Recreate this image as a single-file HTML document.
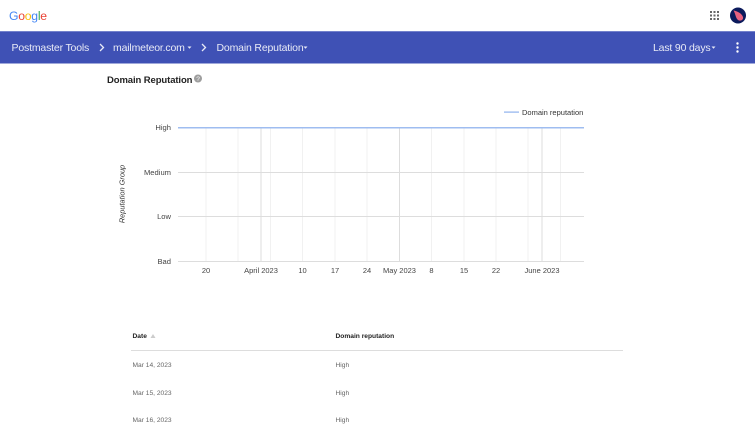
<!DOCTYPE html>
<html><head><meta charset="utf-8"><style>
html,body{margin:0;padding:0;background:#fff}
body{width:755px;height:430px;position:relative;overflow:hidden;font-family:"Liberation Sans",sans-serif}
.t{position:absolute;white-space:nowrap;line-height:1}
.g{position:absolute;top:0;left:0}
.n{top:42.500px;font-size:10.500px;color:#e8eaf6;letter-spacing:-.17px}
.c{top:124px;font-size:7.600px;color:#444;right:584px}
.x{top:266.500px;font-size:7.500px;color:#444;transform:translateX(-50%)}
.h{font-size:6.650px;font-weight:bold;color:#222;top:334px}
.d{font-size:6.650px;color:#666}
</style></head><body>
<div class="t" style="left:9px;top:9.500px;font-size:12.200px;letter-spacing:-.25px"><span style="color:#4285f4">G</span><span style="color:#ea4335">o</span><span style="color:#fbbc05">o</span><span style="color:#4285f4">g</span><span style="color:#34a853">l</span><span style="color:#ea4335">e</span></div>
<svg class="g" width="755" height="430" style="left:0;top:0">
<rect x="0" y="31" width="755" height="32.500" fill="#3f51b5"/>
<rect x="0" y="31" width="755" height="1" fill="#7381cc"/>
<g fill="#666"><rect x="710" y="11" width="2" height="2"/><rect x="713.500" y="11" width="2" height="2"/><rect x="717" y="11" width="2" height="2"/><rect x="710" y="14.500" width="2" height="2"/><rect x="713.500" y="14.500" width="2" height="2"/><rect x="717" y="14.500" width="2" height="2"/><rect x="710" y="18" width="2" height="2"/><rect x="713.500" y="18" width="2" height="2"/><rect x="717" y="18" width="2" height="2"/></g>
<circle cx="738" cy="15.500" r="8" fill="#0b1a5c"/>
<path d="M733.500 10.500C737 11 742 13.500 743 17C743.700 20 740.500 21.500 738 20C735.500 18 735.500 13.500 733.500 10.500Z" fill="#e8617f"/>
<path d="M100 44l3.500 3.500-3.500 3.500M202 44l3.500 3.500-3.500 3.500" fill="none" stroke="#e8eaf6" stroke-width="1.300"/>
<path d="M187.500 46.500h4l-2 2.200zM303.500 46.500h4l-2 2.200zM711.500 46.500h4l-2 2.200z" fill="#e8eaf6"/>
<g fill="#fff"><circle cx="737.500" cy="43.500" r="1.200"/><circle cx="737.500" cy="47.500" r="1.200"/><circle cx="737.500" cy="51.500" r="1.200"/></g>
<circle cx="198" cy="78.500" r="4" fill="#9e9e9e"/>
<text x="198" y="81" font-size="6.500" fill="#fff" text-anchor="middle" font-family="Liberation Sans">?</text>
<g fill="#f1f1f1">
<rect x="205.500" y="128" width="1" height="134"/><rect x="237.500" y="128" width="1" height="134"/><rect x="270" y="128" width="1" height="134"/><rect x="302" y="128" width="1" height="134"/><rect x="334.500" y="128" width="1" height="134"/><rect x="366.500" y="128" width="1" height="134"/><rect x="431" y="128" width="1" height="134"/><rect x="463.500" y="128" width="1" height="134"/><rect x="495.500" y="128" width="1" height="134"/><rect x="527.500" y="128" width="1" height="134"/><rect x="560" y="128" width="1" height="134"/>
</g>
<g fill="#ddd">
<rect x="260.500" y="128" width="1" height="134"/><rect x="399" y="128" width="1" height="134"/><rect x="541.500" y="128" width="1" height="134"/>
<rect x="178" y="172" width="406" height="1"/><rect x="178" y="216" width="406" height="1"/><rect x="178" y="261" width="406" height="1"/>
</g>
<rect x="178" y="127" width="406" height="1.500" fill="#9fbdf0"/>
<rect x="504" y="111.500" width="15" height="1.200" fill="#8fb2ee"/>
<rect x="131" y="350" width="492" height="1" fill="#ddd"/>
<path d="M150.500 338l2.500-4 2.500 4z" fill="#ccc"/>
</svg>
<div class="t n" style="left:11.500px">Postmaster Tools</div>
<div class="t n" style="left:113px">mailmeteor.com</div>
<div class="t n" style="left:216.500px">Domain Reputation</div>
<div class="t n" style="left:653px">Last 90 days</div>
<div class="t" style="left:107px;top:75.500px;font-size:9.500px;letter-spacing:-.1px;font-weight:bold;color:#222">Domain Reputation</div>
<div class="t" style="left:522px;top:108.500px;font-size:7.500px;color:#333">Domain reputation</div>
<div class="t c" style="top:124px">High</div>
<div class="t c" style="top:168.500px">Medium</div>
<div class="t c" style="top:213px">Low</div>
<div class="t c" style="top:257.500px">Bad</div>
<div class="t" style="left:122px;top:194px;font-size:7.400px;font-style:italic;color:#333;transform:translate(-50%,-50%) rotate(-90deg)">Reputation Group</div>
<div class="t x" style="left:206px">20</div>
<div class="t x" style="left:261px">April 2023</div>
<div class="t x" style="left:302.500px">10</div>
<div class="t x" style="left:335px">17</div>
<div class="t x" style="left:367px">24</div>
<div class="t x" style="left:399.500px">May 2023</div>
<div class="t x" style="left:431.500px">8</div>
<div class="t x" style="left:464px">15</div>
<div class="t x" style="left:496px">22</div>
<div class="t x" style="left:542px">June 2023</div>
<div class="t h" style="left:132.500px">Date</div>
<div class="t h" style="left:335.500px">Domain reputation</div>
<div class="t d" style="left:132.500px;top:362.500px">Mar 14, 2023</div>
<div class="t d" style="left:335.500px;top:362.500px">High</div>
<div class="t d" style="left:132.500px;top:390.500px">Mar 15, 2023</div>
<div class="t d" style="left:335.500px;top:390.500px">High</div>
<div class="t d" style="left:132.500px;top:418px">Mar 16, 2023</div>
<div class="t d" style="left:335.500px;top:418px">High</div>
</body></html>
